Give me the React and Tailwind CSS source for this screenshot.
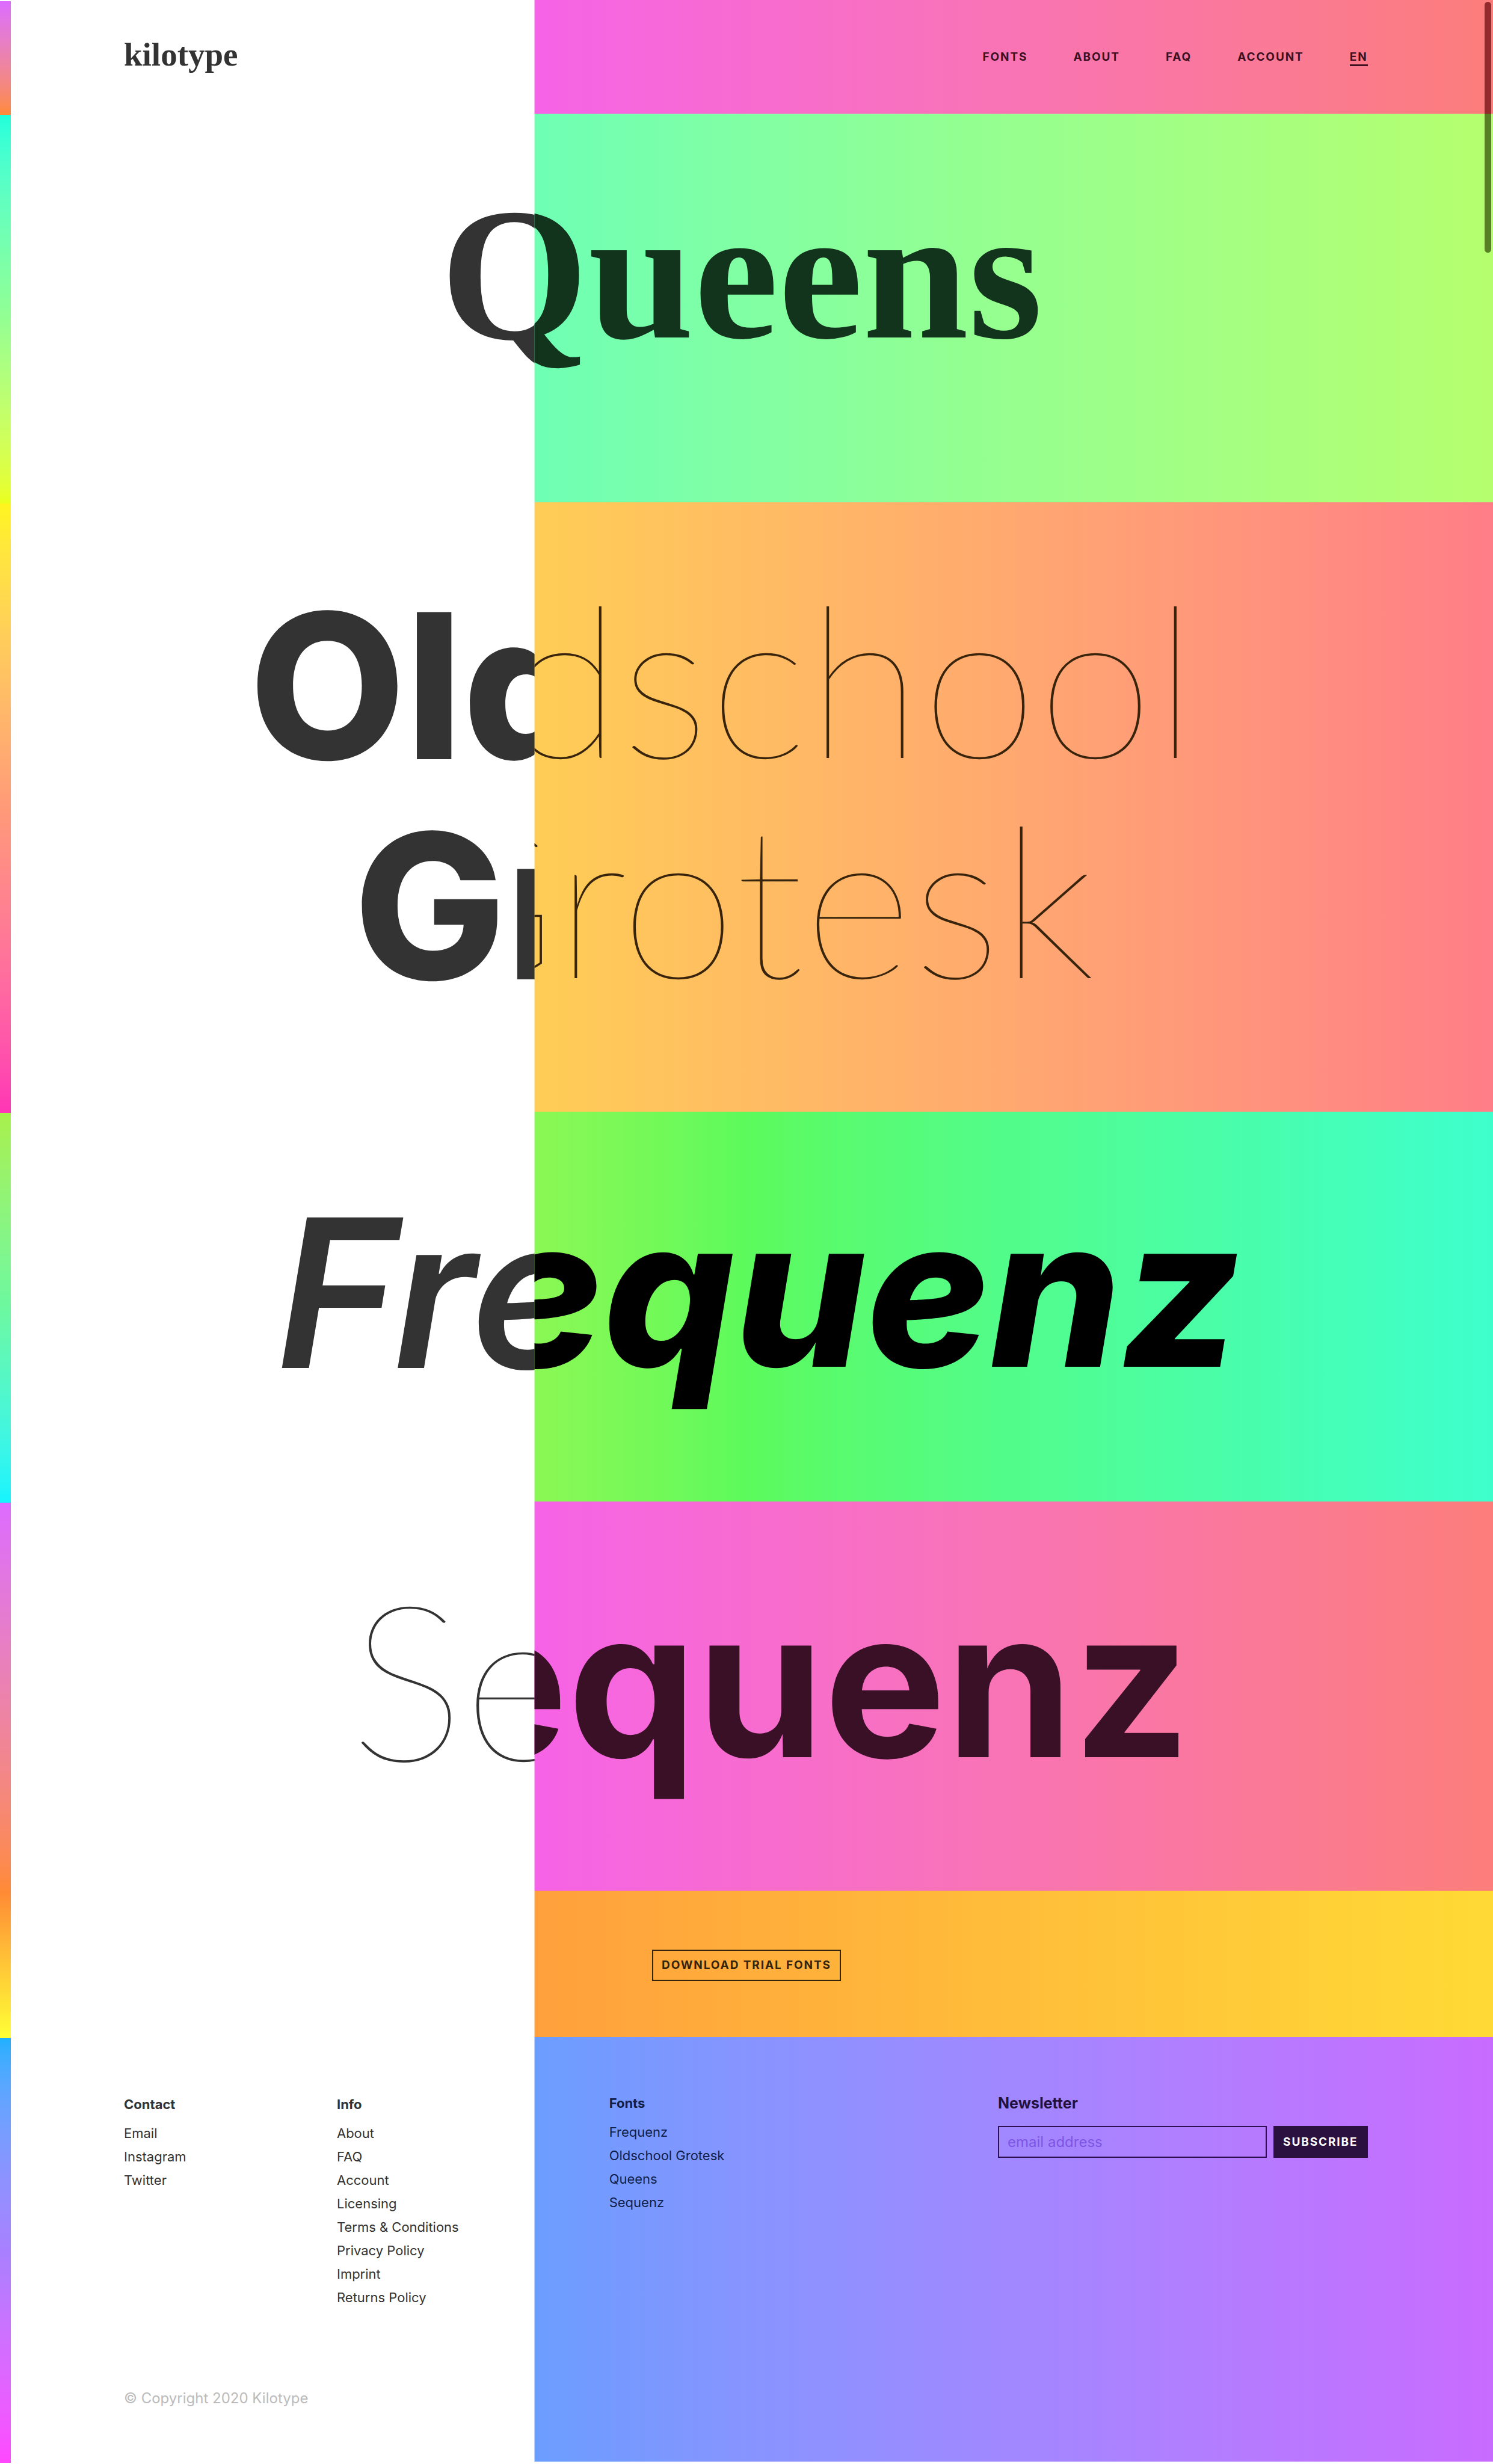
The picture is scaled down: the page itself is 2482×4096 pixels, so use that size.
import React from "react";

const label = "text-[19px] leading-6 font-bold uppercase tracking-widest";

const navItems = ["Fonts", "About", "FAQ", "Account"];
const contactLinks = ["Email", "Instagram", "Twitter"];
const infoLinks = [
  "About",
  "FAQ",
  "Account",
  "Licensing",
  "Terms & Conditions",
  "Privacy Policy",
  "Imprint",
  "Returns Policy",
];
const fontLinks = ["Frequenz", "Oldschool Grotesk", "Queens", "Sequenz"];

function LinkList({ title, links, className }) {
  return (
    <section className={className}>
      <h2 className="mb-[9px] text-[22px] leading-[39px] font-bold">{title}</h2>
      <ul className="text-[22px] leading-[39px]">
        {links.map((link) => (
          <li key={link}>
            <a href="#">{link}</a>
          </li>
        ))}
      </ul>
    </section>
  );
}

/* One band of the plain side: a narrow colour strip, then the white page. */
function PlainBand({ strip, className = "", children }) {
  return (
    <div className="flex last:grow">
      <div className={`w-[18px] shrink-0 bg-linear-to-b ${strip}`} />
      <div className={`-ml-[18px] min-w-0 grow ${className}`}>{children}</div>
    </div>
  );
}

function PlainLayer() {
  return (
    <div className="col-start-1 row-start-1 flex min-w-0 flex-col overflow-hidden pt-[2px] text-[#333] [clip-path:inset(0_64%_0_0)]">
      <PlainBand
        strip="from-[#dd6bff] to-[#ff8a35]"
        className="flex h-[189px] items-center pb-3 pl-[8.3%]"
      >
        <a
          href="#"
          className="font-['Liberation_Serif',serif] text-[55px] leading-none font-bold"
        >
          kilotype
        </a>
      </PlainBand>
      <PlainBand
        strip="from-[#1effdc] via-[#8eff96] to-[#eaff1c]"
        className="pt-[105px] pb-[221px] pl-[29.5%]"
      >
        <h1 className="font-['Liberation_Serif',serif] text-[316px] leading-[320px] font-bold whitespace-nowrap">
          Queens
        </h1>
      </PlainBand>
      <PlainBand
        strip="from-[#fff41c] via-[#ff9a78] to-[#ff35b5]"
        className="pt-[120px] pb-[161px] text-[336px] leading-[366px] font-extrabold whitespace-nowrap"
      >
        <p className="pl-[16.7%]">Oldschool</p>
        <p className="pl-[23.7%]">Grotesk</p>
      </PlainBand>
      <PlainBand
        strip="from-[#a8f04a] via-[#6cf8a0] to-[#14f4ff]"
        className="pt-[116px] pb-[166px] pl-[18.5%]"
      >
        <p className="text-[344px] leading-[366px] font-semibold whitespace-nowrap italic">
          Frequenz
        </p>
      </PlainBand>
      <PlainBand
        strip="from-[#dd6bff] to-[#ff8a35]"
        className="pt-[106px] pb-[175px] pl-[23.4%]"
      >
        <p className="font-[Lato,sans-serif] text-[362px] leading-[366px] font-thin whitespace-nowrap">
          Sequenz
        </p>
      </PlainBand>
      <PlainBand strip="from-[#ff8a35] to-[#ffff35]" className="h-[243px]" />
      <PlainBand
        strip="from-[#1eb0ff] via-[#a880ff] to-[#ff48ff]"
        className="px-[8.3%] pt-[91px] pb-[89px]"
      >
        <div className="grid grid-cols-[17.1%_1fr]">
          <LinkList title="Contact" links={contactLinks} />
          <LinkList title="Info" links={infoLinks} />
        </div>
        <p className="mt-[130px] text-[24px] leading-9 text-[#bbb]">
          © Copyright 2020 Kilotype
        </p>
      </PlainBand>
    </div>
  );
}

function ColorLayer() {
  return (
    <div className="col-start-1 row-start-1 mb-[2px] flex min-w-0 flex-col overflow-hidden [clip-path:inset(0_0_0_35.8%)]">
      <header className="flex h-[189px] items-center justify-end bg-linear-to-r from-[#f663e6] from-[36%] to-[#fc7d7a] pt-1 pr-[8.4%] pl-[8.3%] text-[#3c101f]">
        <nav className={`flex gap-[76px] ${label}`}>
          {navItems.map((item) => (
            <a key={item} href="#">
              {item}
            </a>
          ))}
          <a href="#" className="border-b-3 border-[#3c101f]">
            EN
          </a>
        </nav>
      </header>
      <section
        aria-hidden="true"
        className="bg-linear-to-r from-[#6effb4] from-[36%] via-[#92ff92] via-[64%] to-[#b5ff6e] pt-[105px] pb-[221px] pl-[29.5%] text-[#12341c]"
      >
        <p className="font-['Liberation_Serif',serif] text-[316px] leading-[320px] font-bold whitespace-nowrap">
          Queens
        </p>
      </section>
      <section
        aria-hidden="true"
        className="bg-linear-to-r from-[#ffcd55] from-[36%] via-[#ffaa6e] via-[66%] to-[#ff7d87] pt-[107px] pb-[174px] font-[Lato,sans-serif] text-[350px] leading-[366px] font-thin whitespace-nowrap text-[#38240c]"
      >
        <p className="pl-[20.1%]">Oldschool</p>
        <p className="pl-[26.9%]">Grotesk</p>
      </section>
      <section
        aria-hidden="true"
        className="bg-linear-to-r from-[#8af854] from-[36%] via-[#5cfa5c] via-[50%] to-[#3effcc] pt-[116px] pb-[166px] pl-[18.8%] text-black"
      >
        <p className="text-[344px] leading-[366px] font-extrabold whitespace-nowrap italic">
          Frequenz
        </p>
      </section>
      <section
        aria-hidden="true"
        className="bg-linear-to-r from-[#f663e6] from-[36%] to-[#fc7d7a] pt-[119px] pb-[162px] pl-[20.9%] text-[#391025]"
      >
        <p className="text-[340px] leading-[366px] font-bold whitespace-nowrap">
          Sequenz
        </p>
      </section>
      <section className="flex h-[243px] items-center justify-center bg-linear-to-r from-[#ffa03c] from-[36%] to-[#ffda35] pt-1 text-[#33240c]">
        <button
          type="button"
          className={`h-[52px] border-2 border-[#33240c] px-[14px] ${label}`}
        >
          Download trial fonts
        </button>
      </section>
      <footer className="grid grow grid-cols-[31.4%_1fr] bg-linear-to-r from-[#6b9dff] from-[36%] to-[#c86bff] pt-[91px] pr-[8.4%] pl-[40.8%] text-[#22123e]">
        <LinkList
          title="Fonts"
          links={fontLinks}
          className="whitespace-nowrap text-[#101f4a]"
        />
        <form className="justify-self-end" onSubmit={(e) => e.preventDefault()}>
          <label
            htmlFor="newsletter-email"
            className="mb-[18px] block text-[25px] leading-[39px] font-bold"
          >
            Newsletter
          </label>
          <div className="flex gap-[11px]">
            <input
              id="newsletter-email"
              type="email"
              placeholder="email address"
              className="h-[53px] w-[447px] border-2 border-[#2e1050] px-[14px] text-[24px] placeholder:text-[#7d55e4]"
            />
            <button
              type="submit"
              className={`h-[53px] bg-[#2a1140] px-4 text-white ${label}`}
            >
              Subscribe
            </button>
          </div>
        </form>
      </footer>
    </div>
  );
}

export default function App() {
  return (
    <div className="relative grid grid-cols-1 bg-white font-[Inter,sans-serif]">
      <PlainLayer />
      <ColorLayer />
      <div
        aria-hidden="true"
        className="absolute top-[3px] right-[3px] h-[417px] w-[11px] rounded-full bg-linear-to-b from-[#932b2c] from-[186px] to-[#578024] to-[186px]"
      />
    </div>
  );
}
